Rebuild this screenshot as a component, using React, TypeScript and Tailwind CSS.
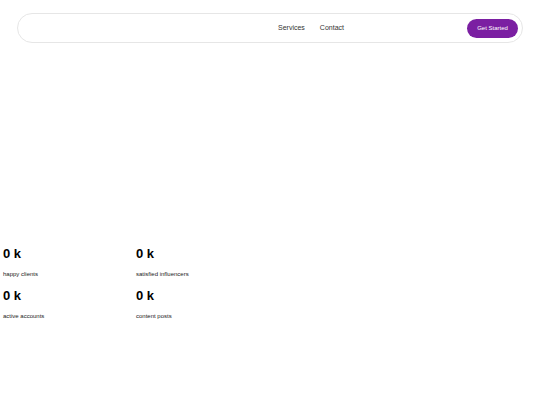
import React from "react";

const stats = [
  { value: "0 k", label: "happy clients" },
  { value: "0 k", label: "satisfied influencers" },
  { value: "0 k", label: "active accounts" },
  { value: "0 k", label: "content posts" },
];

function Navbar() {
  return (
    <nav className="ml-[17px] mr-[17px] mt-[13px] flex h-[30px] items-center rounded-full border border-[#e6e6e6] bg-white pl-[4px] pr-[4px]">
      <div className="w-[256px]" />
      <ul className="flex items-center gap-[15px] pt-[1px] text-[7px] text-[#333]">
        <li>Services</li>
        <li>Contact</li>
      </ul>
      <button className="ml-auto h-[19px] w-[51px] rounded-full bg-[#7b1fa2] text-[6px] text-white">
        Get Started
      </button>
    </nav>
  );
}

export default function App() {
  return (
    <div
      className="min-h-[405px] bg-white text-black"
      style={{ fontFamily: '"Liberation Sans", Arial, sans-serif' }}
    >
      <Navbar />
      <section className="mt-[203px] grid grid-cols-[133px_133px] gap-y-[10px] pl-[3px]">
        {stats.map((s) => (
          <div key={s.label}>
            <div className="h-[16px] text-[13px] font-bold leading-[16px]">{s.value}</div>
            <div className="mt-[8px] h-[8px] text-[6px] leading-[8px] text-[#222]">{s.label}</div>
          </div>
        ))}
      </section>
    </div>
  );
}
